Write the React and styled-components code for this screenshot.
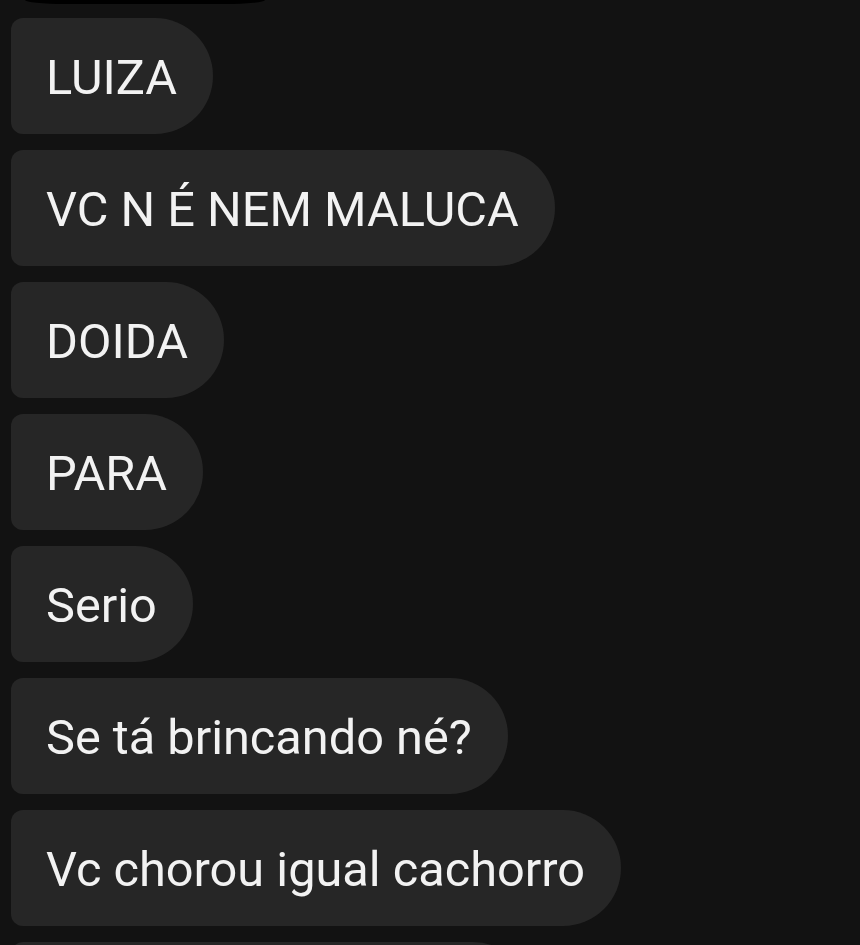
import React from "react";
import styled, { createGlobalStyle } from "styled-components";

const Global = createGlobalStyle`
  html, body { margin: 0; padding: 0; background: #121212; }
  body { font-family: Roboto, "Liberation Sans", Arial, sans-serif; }
`;

const Thread = styled.div`
  display: flex;
  flex-direction: column;
  align-items: flex-start;
  gap: 16px;
  padding: 0 0 0 11px;
  height: 945px;
  overflow: hidden;
  background: #121212;
`;

const PrevTail = styled.div`
  flex: 0 0 4px;
  width: 240px;
  height: 4px;
  margin-left: 14px;
  margin-bottom: -2px;
  background: #000;
  border-bottom-left-radius: 40px 4px;
  border-bottom-right-radius: 40px 4px;
`;

const Bubble = styled.div`
  flex: 0 0 116px;
  box-sizing: border-box;
  height: 116px;
  display: flex;
  align-items: center;
  padding: 3px 36px 0 35px;
  background: #262626;
  color: #f2f2f2;
  font-size: 48.7px;
  white-space: nowrap;
  border-radius: 12px 58px 58px 12px;
  min-width: ${(p) => p.$minWidth || "auto"};
`;

const messages = [
  "LUIZA",
  "VC N É NEM MALUCA",
  "DOIDA",
  "PARA",
  "Serio",
  "Se tá brincando né?",
  "Vc chorou igual cachorro",
];

export default function App() {
  return (
    <>
      <Global />
      <Thread>
        <PrevTail />
        {messages.map((m) => (
          <Bubble key={m}>{m}</Bubble>
        ))}
        <Bubble $minWidth="520px" aria-hidden="true" />
      </Thread>
    </>
  );
}
